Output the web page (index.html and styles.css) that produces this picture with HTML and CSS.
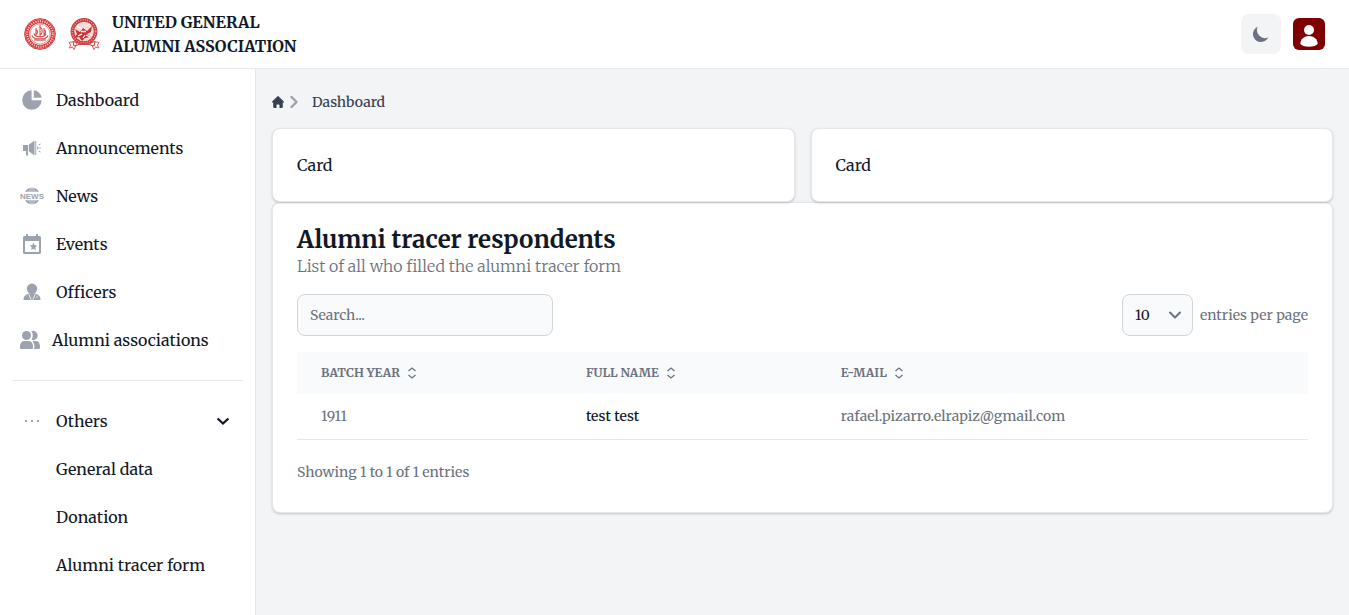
FILE: index.html
```html
<!DOCTYPE html>
<html lang="en">
<head>
<meta charset="utf-8">
<meta name="viewport" content="width=device-width, initial-scale=1">
<title>United General Alumni Association</title>
<link rel="stylesheet" href="styles.css">
</head>
<body>
<header class="topbar">
  <a class="brand" href="#">
    <svg class="seal" viewBox="0 0 32 32" aria-hidden="true">
      <circle cx="16" cy="16" r="15.4" fill="#fff" stroke="#d33c3c" stroke-width="1"/>
      <circle cx="16" cy="16" r="12.8" fill="none" stroke="#d93a3a" stroke-width="4"/>
      <circle cx="16" cy="16" r="12.8" fill="none" stroke="#f7cccc" stroke-width="2" stroke-dasharray="1.1 1.2"/>
      <circle cx="16" cy="16" r="10" fill="#fff" stroke="#e37070" stroke-width=".7"/>
      <path d="M8 17.5c1.500 5 14.500 5 16 0M10 15.500c1.500 4.500 10.500 4.500 12 0M12 10v8M16 7v12M20 10v8M12 11.500c2 1 2 4 0 5M16 9c3 2 3 6 0 8M20 11.500c2 1 2 4 0 5M10 22h12" fill="none" stroke="#dc5050" stroke-width="1.100"/>
      <path d="M12 20h8l-1 3h-6z" fill="#e58080"/>
    </svg>
    <svg class="seal" viewBox="0 0 32 32" aria-hidden="true">
      <path d="M1 24.500l5-1 2 4-2 4-1.500-2.500L1.500 30l1-3zM31 24.500l-5-1-2 4 2 4 1.500-2.500 3 1-1-3z" fill="#fff" stroke="#d84a4a" stroke-width=".9"/>
      <circle cx="16" cy="13.500" r="11.600" fill="#f8dada" stroke="#c83a3a" stroke-width="3.600"/>
      <circle cx="16" cy="13.500" r="11.600" fill="none" stroke="#e9a0a0" stroke-width="1.600" stroke-dasharray="1 1.300"/>
      <path d="M7 11l5 3 3-4 4 3 5-5-1 6-4 2 4 3-6 1-3 3-3-4-5 1 3-4z" fill="#c93434"/>
      <path d="M9 8l5 3M18 8l4-2M10 18l4-2M18 17l4 2M13 13.500h5M15 20l2-3" stroke="#fff" stroke-width="1.300"/>
      <path d="M5 23.500q11 4.500 22 0l-1 4.500q-10-4-20 0z" fill="#fff" stroke="#d33a3a" stroke-width="1"/>
      <path d="M8 26q8-2.500 16 0" fill="none" stroke="#d65050" stroke-width="1.300" stroke-dasharray="1.200 .8"/>
    </svg>
    <span class="brand-name">UNITED GENERAL<br>ALUMNI ASSOCIATION</span>
  </a>
  <div class="actions">
    <button class="theme-button" type="button" aria-label="Toggle dark mode">
      <svg width="20" height="20" viewBox="0 0 20 20" fill="currentColor"><path d="M17.293 13.293A8 8 0 016.707 2.707a8.001 8.001 0 1010.586 10.586z"/></svg>
    </button>
    <button class="user-button" type="button" aria-label="Open user menu">
      <svg width="32" height="32" viewBox="0 0 32 32" fill="#fff"><circle cx="16" cy="12" r="5"/><path d="M7.300 26c0-5 4-8 8.700-8s8.700 3 8.700 8c-1.500 1.500-4.500 2.700-8.700 2.700S8.800 27.500 7.300 26z"/></svg>
    </button>
  </div>
</header>
<div class="shell">
  <aside class="sidebar">
    <nav aria-label="Main">
      <ul class="menu">
        <li><a class="item" href="#"><svg class="icon" viewBox="0 0 24 24"><path d="M2.200 12A9.700 9.700 0 0 1 11.600 2.300V12.200H21.600A9.700 9.700 0 1 1 2.200 12z"/><path d="M13.800 2.200a9.500 9.500 0 0 1 7.900 7.600h-7.900z"/></svg>Dashboard</a></li>
        <li><a class="item" href="#"><svg class="icon" viewBox="0 0 24 24"><path d="M3 9h5.200v6H8v4.500H6V15H3zM9 8.500l5.500-4v15l-5.500-4z"/><path d="M15.300 5h.9v14h-.9zM17.200 10.300c1.800.4 1.800 3 0 3.400z"/><path d="M18.800 8.800l1.700-.8M19.500 12h1.300M18.800 15.200l1.700.8" stroke="currentColor" fill="none"/></svg>Announcements</a></li>
        <li><a class="item" href="#"><svg class="icon" viewBox="0 0 24 24"><path d="M5 7.800a8 8 0 0 1 14 0zM5 16.200a8 8 0 0 0 14 0z"/><path d="M12 4v4M12 16v4M9 8q.5-2.500 2-4M15 8q-.5-2.500-2-4M9 16q.5 2.500 2 4M15 16q-.5 2.500-2 4" fill="none" stroke="#fff" stroke-width=".5"/><text class="news-label" x="12" y="15" text-anchor="middle">NEWS</text></svg>News</a></li>
        <li><a class="item" href="#"><svg class="icon" viewBox="0 0 24 24"><path fill-rule="evenodd" d="M6 2h2v2h8V2h2v2h1.500A1.500 1.500 0 0 1 21 5.500v15a1.500 1.500 0 0 1-1.500 1.500h-15A1.500 1.500 0 0 1 3 20.500v-15A1.500 1.500 0 0 1 4.500 4H6zM5 9v11h14V9z"/><path d="M13.500 10.800l1.100 2.300 2.600.4-1.900 1.800.5 2.600-2.300-1.200-2.300 1.200.5-2.600-1.900-1.800 2.600-.4z"/></svg>Events</a></li>
        <li><a class="item" href="#"><svg class="icon" viewBox="0 0 24 24"><circle cx="12" cy="8.700" r="5.200"/><path d="M3.500 20c0-4 2-5.500 5.500-6.500h6c3.500 1 5.500 2.500 5.500 6.500z"/><path d="M8.800 14.500l2.300 5M15.200 14.500l-2.300 5" stroke="#fff" stroke-width=".9"/><path d="M16 16.500h1.800v1.200H16z" fill="#d1d5db"/></svg>Officers</a></li>
        <li><a class="item item-wide" href="#"><svg class="icon" viewBox="0 0 24 24"><circle cx="8.500" cy="7.500" r="4.500"/><path d="M2 18.500c0-3.500 2-5.500 4.500-5.500h4c2.500 0 4.500 2 4.500 5.500v1c0 1-.8 1.500-1.500 1.500h-10C2.700 21 2 20.500 2 19.500zM13.500 3.200a4.600 4.600 0 1 1 0 8.600c1.700-2.500 1.700-6 0-8.600zM16 13h2c2.500 0 4 2 4 5.500v1c0 1-.7 1.500-1.500 1.500H16c.7-1 .8-5.500-1.500-7.500z"/></svg>Alumni associations</a></li>
      </ul>
      <ul class="menu menu-others">
        <li>
          <button class="item" type="button" aria-expanded="true"><svg class="icon" viewBox="0 0 24 24"><path d="M5 11h2v2H5zM11 11h2v2h-2zM17 11h2v2h-2z"/></svg><span class="item-label">Others</span><svg class="chevron" viewBox="0 0 24 24"><path d="M5.500 9l6.500 6 6.500-6" fill="none" stroke="currentColor" stroke-width="2.800"/></svg></button>
          <ul class="submenu">
            <li><a class="item" href="#">General data</a></li>
            <li><a class="item" href="#">Donation</a></li>
            <li><a class="item" href="#">Alumni tracer form</a></li>
          </ul>
        </li>
      </ul>
    </nav>
  </aside>
  <main class="content">
    <nav class="crumbs" aria-label="Breadcrumb">
      <a class="home" href="#" aria-label="Home"><svg width="12" height="12" viewBox="0 0 20 20" fill="currentColor"><path d="M19.700 9.300l-9-9a1 1 0 0 0-1.400 0l-9 9A1 1 0 0 0 1 11h1v7a2 2 0 0 0 2 2h3.500v-5a1 1 0 0 1 1-1h3a1 1 0 0 1 1 1v5H16a2 2 0 0 0 2-2v-7h1a1 1 0 0 0 .7-1.700z"/></svg></a>
      <svg class="crumb-arrow" width="12" height="12" viewBox="0 0 12 12"><path d="M3.500 1l5 5-5 5" fill="none" stroke="currentColor" stroke-width="2.400" stroke-linecap="round" stroke-linejoin="round"/></svg>
      <span class="current" aria-current="page">Dashboard</span>
    </nav>
    <div class="card-grid">
      <section class="card">Card</section>
      <section class="card">Card</section>
    </div>
    <section class="card respondents">
      <h1>Alumni tracer respondents</h1>
      <p class="subtitle">List of all who filled the alumni tracer form</p>
      <div class="tools">
        <input class="search" type="search" placeholder="Search..." aria-label="Search">
        <div class="page-size">
          <select class="size-select" id="size"><option>5</option><option selected>10</option><option>25</option></select>
          <label for="size">entries per page</label>
        </div>
      </div>
      <table class="table">
        <thead>
          <tr>
            <th class="col-year"><button class="sort" type="button">BATCH YEAR<svg class="sort-icon" viewBox="0 0 12 14"><path d="M2.500 5L6 2 9.500 5M2.500 9L6 12 9.500 9"/></svg></button></th>
            <th class="col-name"><button class="sort" type="button">FULL NAME<svg class="sort-icon" viewBox="0 0 12 14"><path d="M2.500 5L6 2 9.500 5M2.500 9L6 12 9.500 9"/></svg></button></th>
            <th><button class="sort" type="button">E-MAIL<svg class="sort-icon" viewBox="0 0 12 14"><path d="M2.500 5L6 2 9.500 5M2.500 9L6 12 9.500 9"/></svg></button></th>
          </tr>
        </thead>
        <tbody>
          <tr><td>1911</td><td class="name">test test</td><td>rafael.pizarro.elrapiz@gmail.com</td></tr>
        </tbody>
      </table>
      <p class="summary">Showing 1 to 1 of 1 entries</p>
    </section>
  </main>
</div>
</body>
</html>
```
FILE: styles.css
```css
* { box-sizing: border-box; }

body {
  margin: 0;
  min-height: 100vh;
  display: flex;
  flex-direction: column;
  background: #f3f4f6;
  color: #111827;
  font: 16px/24px Merriweather, "DejaVu Serif Condensed", "DejaVu Serif", serif;
}

a { color: inherit; text-decoration: none; }
button { border: 0; padding: 0; background: none; color: inherit; font: inherit; cursor: pointer; }
ul { list-style: none; margin: 0; padding: 0; }
svg { flex: none; }

.topbar {
  display: flex;
  align-items: center;
  justify-content: space-between;
  padding: 10px 24px;
  background: #fff;
  border-bottom: 1px solid #e5e7eb;
}
.brand { display: flex; align-items: center; gap: 12px; }
.seal { width: 32px; height: 32px; }
.brand-name { font-weight: 700; }
.actions { display: flex; align-items: center; gap: 12px; }
.theme-button {
  display: grid;
  place-items: center;
  width: 40px;
  height: 40px;
  border-radius: 8px;
  background: #f3f4f6;
  color: #6b7280;
}
.user-button { display: grid; width: 32px; height: 32px; border-radius: 6px; background: #7f0000; }

.shell { flex: 1; display: flex; }
.sidebar {
  flex: none;
  width: 256px;
  padding: 11px 12px;
  background: #fff;
  border-right: 1px solid #e5e7eb;
}
.menu { display: grid; gap: 8px; }
.item { display: flex; align-items: center; gap: 12px; width: 100%; padding: 8px; text-align: left; }
button.item { padding-right: 10px; }
.item-wide { padding-left: 6px; gap: 10px; }
.item-label { flex: 1; }
.icon { width: 24px; height: 24px; fill: #9ca3af; color: #9ca3af; }
.news-label { font: 700 8px "Liberation Sans", sans-serif; }
.chevron { width: 20px; height: 20px; }
.menu-others { margin-top: 20px; padding-top: 20px; border-top: 1px solid #e5e7eb; }
.submenu { display: grid; gap: 8px; padding-top: 8px; }
.submenu .item { padding-left: 44px; }

.content { flex: 1; min-width: 0; padding: 21px 16px; }
.crumbs { display: flex; align-items: center; height: 24px; margin-bottom: 14px; font-size: 14px; font-weight: 500; color: #374151; }
.home { display: grid; }
.crumb-arrow { margin: 0 12px 0 4px; color: #9ca3af; }

.card-grid { display: grid; grid-template-columns: 1fr 1fr; gap: 16px; }
.card {
  padding: 24px;
  background: #fff;
  border: 1px solid #e5e7eb;
  border-radius: 8px;
  box-shadow: 0 1px 3px rgba(0, 0, 0, .1), 0 1px 2px rgba(0, 0, 0, .1);
}
.respondents { padding-top: 22px; padding-bottom: 28px; }
h1 { margin: 0; font-size: 24px; font-weight: 700; line-height: 30px; }
.subtitle { margin: 0 0 16px; font-weight: 300; line-height: 23px; color: #6b7280; }
.tools { display: flex; align-items: center; justify-content: space-between; font-size: 14px; color: #6b7280; }
.search, .size-select {
  height: 42px;
  padding: 0 12px;
  border: 1px solid #d1d5db;
  border-radius: 8px;
  background-color: #f9fafb;
  color: #111827;
  font: inherit;
}
.search { width: 256px; }
.search::placeholder { color: #6b7280; }
.page-size { display: flex; align-items: center; gap: 7px; }
.size-select {
  width: 71px;
  appearance: none;
  background-image: url("data:image/svg+xml,%3Csvg xmlns='http://www.w3.org/2000/svg' viewBox='0 0 12 8'%3E%3Cpath d='m1 1.500 5 5 5-5' fill='none' stroke='%236b7280' stroke-width='2' stroke-linecap='round' stroke-linejoin='round'/%3E%3C/svg%3E");
  background-repeat: no-repeat;
  background-position: right 11px center;
  background-size: 12px 8px;
}

.table { width: 100%; margin-top: 16px; border-collapse: collapse; text-align: left; font-size: 14px; line-height: 21px; color: #6b7280; }
.table th { padding: 0 24px 1px; height: 42px; background: #f9fafb; }
.table td { padding: 12px 24px; border-bottom: 1px solid #e5e7eb; }
.col-year { width: 26.2%; }
.col-name { width: 25.2%; }
.table .name { color: #111827; font-weight: 500; }
.sort { display: flex; align-items: center; gap: 6px; font-size: 12px; line-height: 20px; font-weight: 700; }
.sort-icon { width: 12px; height: 14px; fill: none; stroke: currentColor; stroke-width: 1.3; }
.summary { margin: 20px 0 0; font-size: 14px; color: #6b7280; }
```
